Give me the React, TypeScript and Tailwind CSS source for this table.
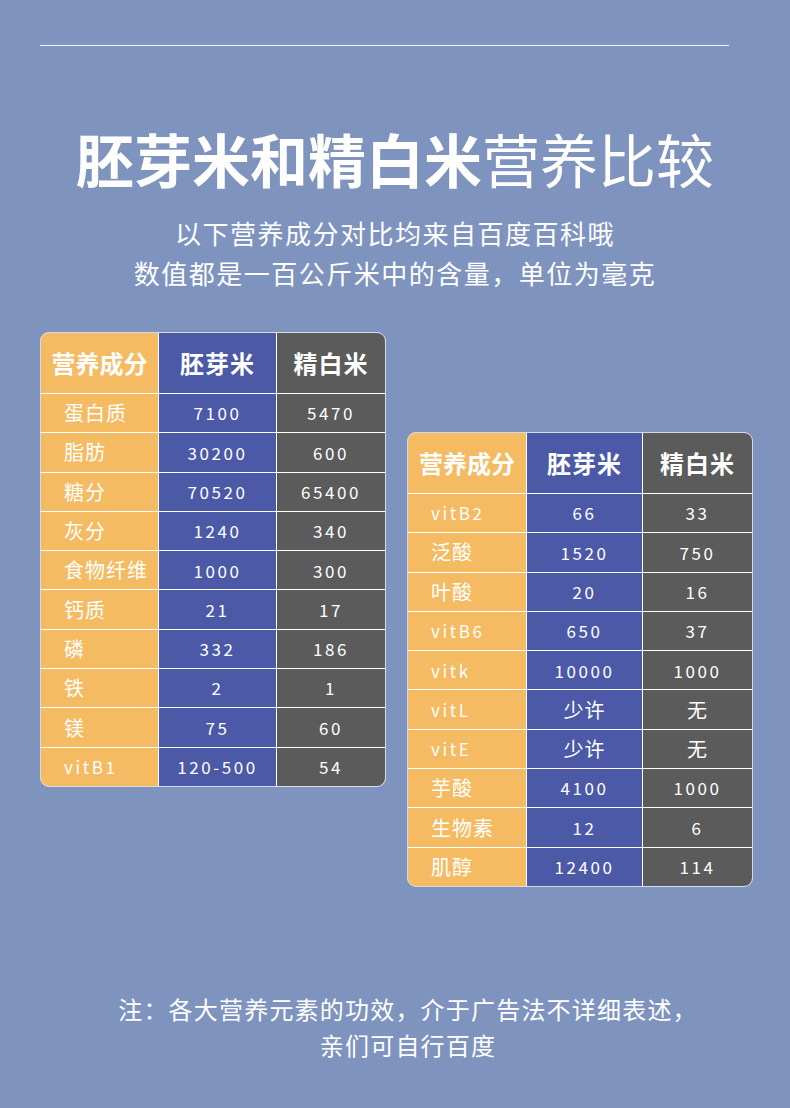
import React from 'react';

type Row = [string, string, string];

const table1: Row[] = [
  ['蛋白质', '7100', '5470'],
  ['脂肪', '30200', '600'],
  ['糖分', '70520', '65400'],
  ['灰分', '1240', '340'],
  ['食物纤维', '1000', '300'],
  ['钙质', '21', '17'],
  ['磷', '332', '186'],
  ['铁', '2', '1'],
  ['镁', '75', '60'],
  ['vitB1', '120-500', '54'],
];

const table2: Row[] = [
  ['vitB2', '66', '33'],
  ['泛酸', '1520', '750'],
  ['叶酸', '20', '16'],
  ['vitB6', '650', '37'],
  ['vitk', '10000', '1000'],
  ['vitL', '少许', '无'],
  ['vitE', '少许', '无'],
  ['芋酸', '4100', '1000'],
  ['生物素', '12', '6'],
  ['肌醇', '12400', '114'],
];

const isLatin = (s: string) => /^[0-9A-Za-z\-]+$/.test(s);

const Cell = ({ text }: { text: string }) => (
  <span
    className={
      isLatin(text)
        ? 'text-[17px] tracking-[2.6px] text-white'
        : 'text-[20px] tracking-[1px] text-white'
    }
  >
    {text}
  </span>
);

const NutritionTable = ({ rows, cols }: { rows: Row[]; cols: string }) => (
  <div className="rounded-[9px] border-[1.5px] border-[#d5dae6] bg-white overflow-hidden">
    <div className={`grid ${cols} gap-px`}>
      <div className="h-[60px] bg-[#f4bb63] flex items-center justify-center text-[24px] font-bold text-white">
        营养成分
      </div>
      <div className="h-[60px] bg-[#4b59a7] flex items-center justify-center text-[24px] font-bold tracking-[1px] text-white">
        胚芽米
      </div>
      <div className="h-[60px] bg-[#5b5b5b] flex items-center justify-center text-[24px] font-bold tracking-[1px] text-white">
        精白米
      </div>
      {rows.map(([name, a, b]) => (
        <React.Fragment key={name}>
          <div className="h-[38.3px] bg-[#f4bb63] flex items-center pl-[23px]">
            <Cell text={name} />
          </div>
          <div className="h-[38.3px] bg-[#4b59a7] flex items-center justify-center">
            <Cell text={a} />
          </div>
          <div className="h-[38.3px] bg-[#5b5b5b] flex items-center justify-center">
            <Cell text={b} />
          </div>
        </React.Fragment>
      ))}
    </div>
  </div>
);

export default function App() {
  return (
    <div
      className="w-[790px] h-[1108px] bg-[#7f93bf] text-white overflow-hidden flex flex-col items-center pt-[45px]"
      style={{ fontFamily: '"Noto Sans CJK SC", "Noto Sans", sans-serif' }}
    >
      <div className="self-start ml-[40px] w-[689px] h-px bg-white/90" />

      <h1 className="mt-[77px] h-[70px] leading-[70px] text-[58px] text-white">
        <span className="font-bold">胚芽米和精白米</span>
        <span className="font-normal">营养比较</span>
      </h1>

      <div className="mt-[20px] text-center text-[26px] leading-[40px] tracking-[1.5px]">
        <p>以下营养成分对比均来自百度百科哦</p>
        <p>数值都是一百公斤米中的含量，单位为毫克</p>
      </div>

      <div className="mt-[39px] self-start ml-[40px] flex items-start gap-[21px]">
        <div className="w-[346px]">
          <NutritionTable rows={table1} cols="grid-cols-[117px_117px_1fr]" />
        </div>
        <div className="w-[346px] mt-[100px]">
          <NutritionTable rows={table2} cols="grid-cols-[118px_115px_1fr]" />
        </div>
      </div>

      <div className="mt-[104px] pl-[26px] text-center text-[24px] leading-[36px] tracking-[1.2px]">
        <p>注：各大营养元素的功效，介于广告法不详细表述，</p>
        <p>亲们可自行百度</p>
      </div>
    </div>
  );
}
